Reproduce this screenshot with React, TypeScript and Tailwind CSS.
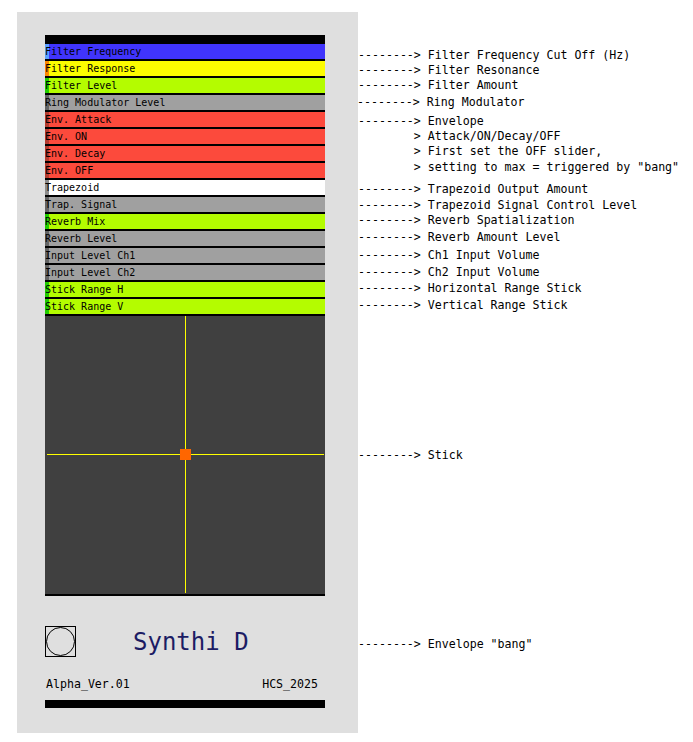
const sliders = [
  { label: "Filter Frequency", cls: "bg-[#4034fc] border-[#5aa0ff]" },
  { label: "Filter Response", cls: "bg-[#fcfc00] border-[#fc8800]" },
  { label: "Filter Level", cls: "bg-[#b4fc00] border-[#22cc00]" },
  { label: "Ring Modulator Level", cls: "bg-[#a0a0a0] border-[#646464]" },
  { label: "Env. Attack", cls: "bg-[#fc4a3c] border-[#b43c30]" },
  { label: "Env. ON", cls: "bg-[#fc4a3c] border-[#b43c30]" },
  { label: "Env. Decay", cls: "bg-[#fc4a3c] border-[#b43c30]" },
  { label: "Env. OFF", cls: "bg-[#fc4a3c] border-[#b43c30]" },
  { label: "Trapezoid", cls: "bg-white border-[#8c8c8c]" },
  { label: "Trap. Signal", cls: "bg-[#a0a0a0] border-[#646464]" },
  { label: "Reverb Mix", cls: "bg-[#b4fc00] border-[#22cc00]" },
  { label: "Reverb Level", cls: "bg-[#a0a0a0] border-[#646464]" },
  { label: "Input Level Ch1", cls: "bg-[#a0a0a0] border-[#646464]" },
  { label: "Input Level Ch2", cls: "bg-[#a0a0a0] border-[#646464]" },
  { label: "Stick Range H", cls: "bg-[#b4fc00] border-[#22cc00]" },
  { label: "Stick Range V", cls: "bg-[#b4fc00] border-[#22cc00]" },
];

// comments next to the patch, spaced like the Pd canvas
const notes = [
  { text: "--------> Filter Frequency Cut Off (Hz)", mt: "mt-0" },
  { text: "--------> Filter Resonance", mt: "mt-0" },
  { text: "--------> Filter Amount", mt: "mt-0" },
  { text: "--------> Ring Modulator", mt: "mt-[2px] -ml-px" },
  { text: "--------> Envelope", mt: "mt-[4px]" },
  { text: "        > Attack/ON/Decay/OFF", mt: "mt-0" },
  { text: "        > First set the OFF slider,", mt: "mt-0" },
  { text: '        > setting to max = triggered by "bang"', mt: "mt-[1px]" },
  { text: "--------> Trapezoid Output Amount", mt: "mt-[7px]" },
  { text: "--------> Trapezoid Signal Control Level", mt: "mt-[1px]" },
  { text: "--------> Reverb Spatialization", mt: "mt-0" },
  { text: "--------> Reverb Amount Level", mt: "mt-[2px]" },
  { text: "--------> Ch1 Input Volume", mt: "mt-[3px]" },
  { text: "--------> Ch2 Input Volume", mt: "mt-[2px]" },
  { text: "--------> Horizontal Range Stick", mt: "mt-[1px]" },
  { text: "--------> Vertical Range Stick", mt: "mt-[2px]" },
  { text: "--------> Stick", mt: "mt-[135px]" },
  { text: '--------> Envelope "bang"', mt: "mt-[174px]" },
];

function Stick() {
  return (
    <svg width={280} height={278} className="block bg-[#404040]">
      <line x1={2} y1={138.5} x2={279} y2={138.5} stroke="#ffff00" strokeWidth={1} />
      <line x1={140.5} y1={0} x2={140.5} y2={277} stroke="#ffff00" strokeWidth={1} />
      <rect x={135} y={133} width={11} height={11} fill="#ff6600" />
    </svg>
  );
}

export default function App() {
  return (
    <div className="flex min-h-screen items-start bg-white font-['DejaVu_Sans_Mono',monospace] text-black">
      <div className="ml-[17px] mt-[12px] h-[721px] w-[341px] shrink-0 bg-[#dfdfdf] pl-[28px] pt-[23px]">
        <div className="flex w-[280px] flex-col bg-black">
          <div className="h-[9px]" />
          <div className="flex flex-col gap-[2px]">
            {sliders.map((s) => (
              <div key={s.label} className={`flex h-[15px] items-center border-l-4 ${s.cls}`}>
                <span className="-ml-1 whitespace-pre text-[10px] leading-none">{s.label}</span>
              </div>
            ))}
          </div>
          <div className="mt-[2px]">
            <Stick />
          </div>
          <div className="h-[2px]" />
        </div>

        <div className="flex h-[104px] w-[280px] flex-col">
          <div className="mt-[30px] flex items-center">
            <div className="h-[31px] w-[31px] border border-black">
              <div className="h-full w-full rounded-full border border-black" />
            </div>
            <span className="ml-[57px] text-[24px] leading-none text-[#1c1c64]">Synthi D</span>
          </div>
          <div className="mt-[20px] flex justify-between pl-px pr-[7px] text-[11.6px] leading-[15px]">
            <span>Alpha_Ver.01</span>
            <span>HCS_2025</span>
          </div>
        </div>
        <div className="h-[8px] w-[280px] bg-black" />
      </div>

      <div className="flex flex-col pt-[48px] text-[11.6px] leading-[15px]">
        {notes.map((n) => (
          <div key={n.text} className={`h-[15px] whitespace-pre ${n.mt}`}>
            {n.text}
          </div>
        ))}
      </div>
    </div>
  );
}
